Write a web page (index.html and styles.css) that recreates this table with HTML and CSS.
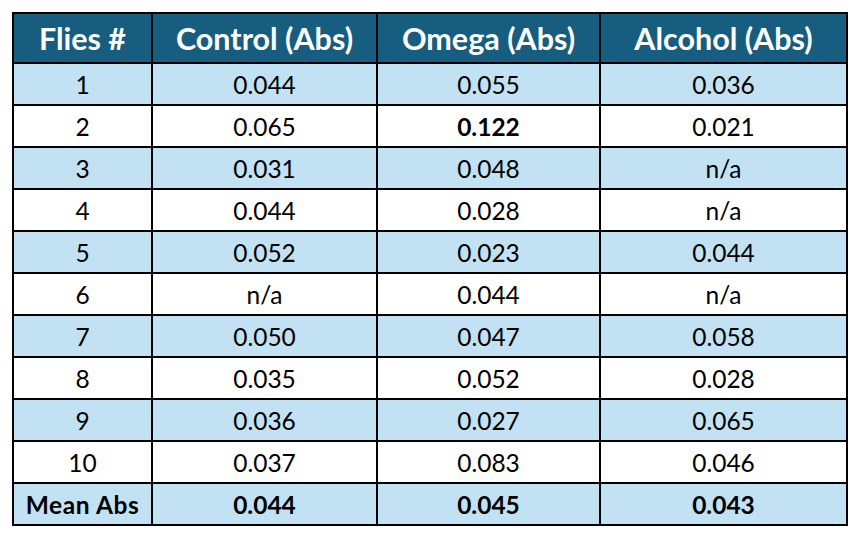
FILE: index.html
```html
<!DOCTYPE html>
<html>
<head>
<meta charset="utf-8">
<link rel="stylesheet" href="styles.css">
</head>
<body>
<table class="data">
  <colgroup>
    <col class="c1"><col class="c2"><col class="c3"><col class="c4">
  </colgroup>
  <thead>
    <tr><th>Flies #</th><th>Control (Abs)</th><th>Omega (Abs)</th><th>Alcohol (Abs)</th></tr>
  </thead>
  <tbody>
    <tr class="alt"><td>1</td><td>0.044</td><td>0.055</td><td>0.036</td></tr>
    <tr><td>2</td><td>0.065</td><td class="b">0.122</td><td>0.021</td></tr>
    <tr class="alt"><td>3</td><td>0.031</td><td>0.048</td><td>n/a</td></tr>
    <tr><td>4</td><td>0.044</td><td>0.028</td><td>n/a</td></tr>
    <tr class="alt"><td>5</td><td>0.052</td><td>0.023</td><td>0.044</td></tr>
    <tr><td>6</td><td>n/a</td><td>0.044</td><td>n/a</td></tr>
    <tr class="alt"><td>7</td><td>0.050</td><td>0.047</td><td>0.058</td></tr>
    <tr><td>8</td><td>0.035</td><td>0.052</td><td>0.028</td></tr>
    <tr class="alt"><td>9</td><td>0.036</td><td>0.027</td><td>0.065</td></tr>
    <tr><td>10</td><td>0.037</td><td>0.083</td><td>0.046</td></tr>
    <tr class="alt mean"><td class="label">Mean Abs</td><td>0.044</td><td>0.045</td><td>0.043</td></tr>
  </tbody>
</table>
</body>
</html>
```

FILE: styles.css
```css
html, body {
  margin: 0;
  padding: 0;
  background: #ffffff;
}
body {
  padding: 12px 0 0 12px;
  font-family: Lato, "Open Sans", sans-serif;
}
.data {
  border-collapse: collapse;
  table-layout: fixed;
  width: 834px;
  border: 2px solid #000;
}
.c1 { width: 139px; }
.c2 { width: 225px; }
.c3 { width: 223px; }
.c4 { width: 247px; }
.data th, .data td {
  border: 2px solid #000;
  text-align: center;
  padding: 0;
  white-space: nowrap;
}
.data th {
  background: #175d7f;
  color: #ffffff;
  font-weight: 700;
  font-size: 30.5px;
  height: 48px;
}
.data td {
  color: #000;
  font-size: 24.5px;
  height: 40px;
  background: #ffffff;
}
.data tr.alt td {
  background: #c2e2f4;
}
.data td.b, .data tr.mean td {
  font-weight: 700;
}
.data td.label {
  letter-spacing: 0.6px;
}
```
